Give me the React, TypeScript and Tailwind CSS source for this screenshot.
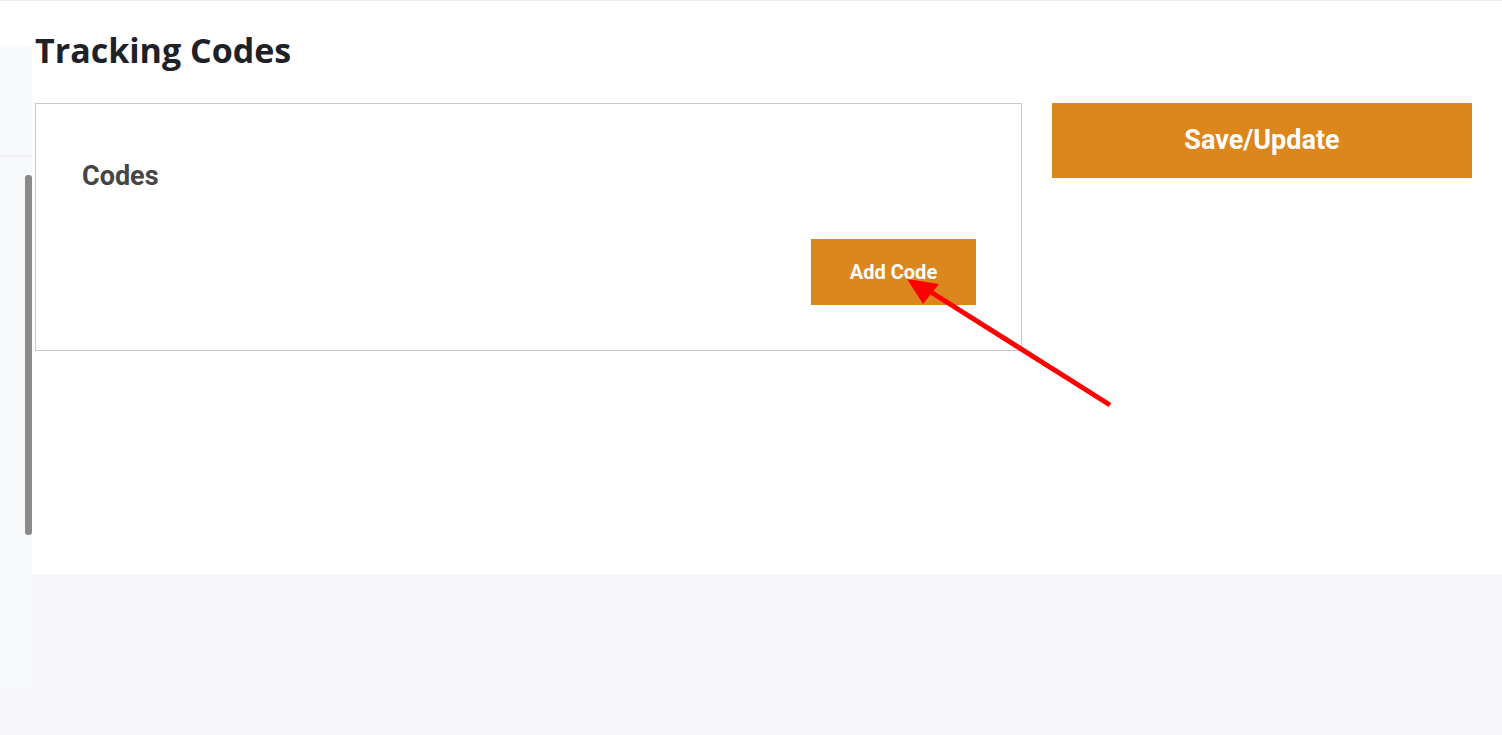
export default function App() {
  return (
    <div className="relative min-h-[735px] w-full bg-[#f7f7f9] border-t border-[#ececef] font-['Roboto',sans-serif]">
      <div className="flex">
        {/* left rail */}
        <div className="w-[32px] shrink-0">
          <div className="h-[45px] bg-white" />
          <div className="relative h-[644px] bg-[#f8f9fb]">
            <div className="h-[111px] border-b-2 border-[#efeff1]" />
            <div className="absolute right-0 top-[129px] h-[360px] w-[7px] rounded-[3px] bg-[#8a8a8a]" />
          </div>
        </div>

        {/* main panel */}
        <div className="flex-1 self-start bg-white h-[573px] pl-[3px] pr-[30px] pt-[32px]">
          <h1 className="font-['Open_Sans',sans-serif] text-[34px] font-bold leading-none text-[#1e2126]">
            Tracking Codes
          </h1>
          <div className="mt-[36px] flex gap-[30px] items-start">
            <div className="w-[987px] h-[248px] border border-[#c9c9c9] pl-[46px] pr-[45px] pt-[59px]">
              <h2 className="text-[27px] font-bold leading-none text-[#454545]">Codes</h2>
              <div className="mt-[49px] flex justify-end">
                <button className="w-[165px] h-[66px] bg-[#dc861e] text-white text-[20px] font-bold">
                  Add Code
                </button>
              </div>
            </div>
            <button className="w-[420px] h-[75px] bg-[#dc861e] text-white text-[27px] font-bold">
              Save/Update
            </button>
          </div>
        </div>
      </div>

      {/* annotation arrow */}
      <svg className="pointer-events-none absolute left-0 top-0" width="1502" height="735">
        <line x1="1110" y1="404" x2="926" y2="288" stroke="#ff0000" strokeWidth="5" />
        <polygon points="907,278 939,283 923,303" fill="#ff0000" />
      </svg>
    </div>
  );
}
